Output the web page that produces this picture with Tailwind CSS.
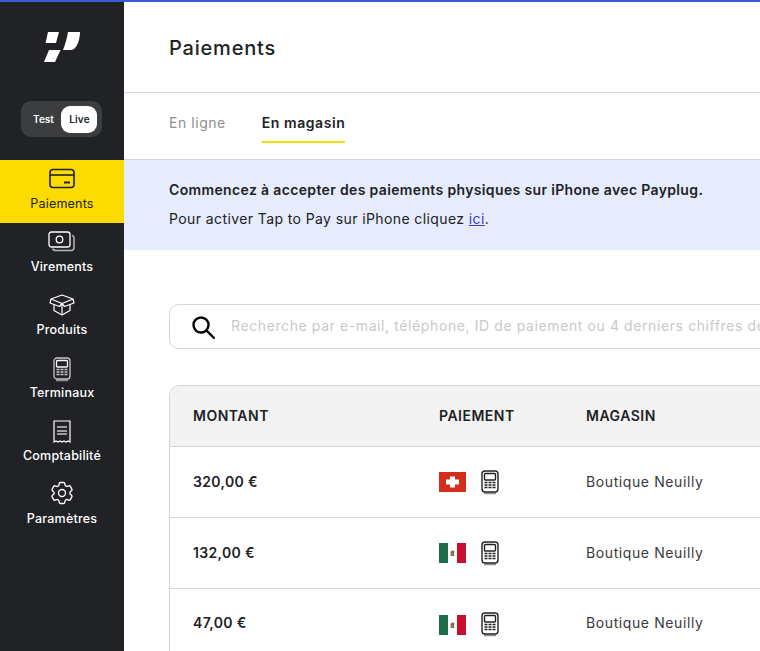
<!DOCTYPE html>
<html lang="fr">
<head>
  <meta charset="UTF-8" />
  <title>Paiements</title>
  <script src="https://cdn.jsdelivr.net/npm/@tailwindcss/browser@4"></script>
</head>
<body class="h-[651px] w-[760px] overflow-hidden bg-white font-['Inter','Liberation_Sans',sans-serif] text-[#202225]">
  <div class="h-[2px] bg-[#3a5bd9]"></div>
  <div class="flex h-[649px]">
    <!-- sidebar -->
    <aside class="w-[124px] shrink-0 bg-[#202225] flex flex-col items-center">
      <svg class="mt-[30px] w-[36px] h-[32px] self-start ml-[44px]" viewBox="0 0 36 32" fill="#fff">
        <path d="M4 0H15L12 11H1.5Z"/>
        <path d="M24 0H36C36 6 34 13 31 16C30 17.2 28.5 18 26.5 18H16.5L11 30H0L5 18H19C21 13 23 6 24 0Z"/>
      </svg>
      <div class="mt-[37px] self-start ml-[21px] w-[81px] h-[36px] rounded-[10px] bg-[#3c3d3f] flex items-center pl-[5px] pr-[4px]">
        <span class="w-[35px] text-center text-[10px] font-semibold text-white">Test</span>
        <span class="w-[36px] h-[27px] rounded-[9px] bg-white flex items-center justify-center text-[10px] font-semibold text-[#202225] tracking-[0.2px] pl-[1px]">Live</span>
      </div>
      <nav class="mt-[23px] w-full flex flex-col tracking-[0.2px]">
        <a class="h-[63px] bg-[#fbdb00] flex flex-col items-center pt-[8px] text-[#202225]">
          <svg class="w-[26px] h-[22px]" viewBox="0 0 26 22" fill="none" stroke="currentColor" stroke-width="1.6">
            <rect x="1" y="1.5" width="24" height="18" rx="3"/>
            <path d="M1 7H25"/>
            <path d="M15 14.5H21" stroke-width="2"/>
          </svg>
          <span class="mt-[5px] text-[12.5px] leading-[18px] font-normal">Paiements</span>
        </a>
        <a class="h-[63px] flex flex-col items-center pt-[8px] text-white">
          <svg class="w-[28px] h-[22px]" viewBox="0 0 28 22" fill="none" stroke="currentColor" stroke-width="1.3">
            <rect x="1" y="1" width="21" height="15" rx="2.5"/>
            <circle cx="11.5" cy="8.5" r="3.3"/>
            <path d="M24 4.5C25.5 4.8 26 5.5 26 7V16.5C26 18.5 25 19.5 23 19.5H8C6 19.5 5 19 4.7 17.5" stroke="#b5b6b8" stroke-width="1.5"/>
          </svg>
          <span class="mt-[5px] text-[12.5px] leading-[18px] font-medium">Virements</span>
        </a>
        <a class="h-[63px] flex flex-col items-center pt-[8px] text-white">
          <svg class="w-[26px] h-[22px]" viewBox="0 0 26 22" fill="none" stroke="currentColor" stroke-width="1.2" stroke-linejoin="round">
            <path d="M13 1L24 5L13 9.5L2 5Z"/>
            <path d="M2 5L1 9L5 10.5V16.5L13 21L21 16.5V10.5L25 9L24 5"/>
            <path d="M13 9.5V21"/>
            <path d="M5 10.5L10.5 12.5L13 9.5L15.5 12.5L21 10.5"/>
          </svg>
          <span class="mt-[5px] text-[12.5px] leading-[18px] font-medium">Produits</span>
        </a>
        <a class="h-[63px] flex flex-col items-center pt-[8px] text-white">
          <svg class="w-[18px] h-[25px]" viewBox="0 0 18 25" fill="none" stroke="currentColor" stroke-width="1.3">
            <rect x="1" y="1" width="16" height="21" rx="3" stroke="#c8c8c8"/>
            <rect x="3.5" y="3.5" width="11" height="6.5" rx="1"/>
            <path d="M3.5 12.5H6.5M7.5 12.5H10.5M11.5 12.5H14.5M3.5 15H6.5M7.5 15H10.5M11.5 15H14.5M3.5 17.5H6.5M7.5 17.5H10.5M11.5 17.5H14.5" stroke-width="1.6" stroke="#c8c8c8"/>
            <path d="M3.5 23.5H14.5" stroke-dasharray="1 1" stroke-width="1.5"/>
          </svg>
          <span class="mt-[2px] text-[12.5px] leading-[18px] font-medium">Terminaux</span>
        </a>
        <a class="h-[63px] flex flex-col items-center pt-[8px] text-white">
          <svg class="w-[18px] h-[23px]" viewBox="0 0 18 23" fill="none" stroke="currentColor" stroke-width="1.2">
            <path d="M1 22V1H17V22L15 21L13 22L11 21L9 22L7 21L5 22L3 21Z"/>
            <path d="M4 7H14M4 11H14M4 14H14" stroke="#c8c8c8" stroke-width="1.4"/>
          </svg>
          <span class="mt-[4px] text-[12.5px] leading-[18px] font-medium">Comptabilité</span>
        </a>
        <a class="h-[63px] flex flex-col items-center pt-[4px] text-white">
          <svg class="w-[28px] h-[28px]" viewBox="0 0 24 24" fill="none" stroke="currentColor" stroke-width="1.15" stroke-linejoin="round">
            <path d="M9.594 3.94c.09-.542.56-.94 1.11-.94h2.593c.55 0 1.02.398 1.11.94l.213 1.281c.063.374.313.686.645.87.074.04.147.083.22.127.325.196.72.257 1.075.124l1.217-.456a1.125 1.125 0 0 1 1.37.49l1.296 2.247a1.125 1.125 0 0 1-.26 1.431l-1.003.827c-.293.241-.438.613-.43.992a7.723 7.723 0 0 1 0 .255c-.008.378.137.75.43.991l1.004.827c.424.35.534.955.26 1.43l-1.298 2.247a1.125 1.125 0 0 1-1.369.491l-1.217-.456c-.355-.133-.75-.072-1.076.124a6.47 6.47 0 0 1-.22.128c-.331.183-.581.495-.644.869l-.213 1.281c-.09.543-.56.94-1.11.94h-2.594c-.55 0-1.019-.398-1.11-.94l-.213-1.281c-.062-.374-.312-.686-.644-.87a6.52 6.52 0 0 1-.22-.127c-.325-.196-.72-.257-1.076-.124l-1.217.456a1.125 1.125 0 0 1-1.369-.49l-1.297-2.247a1.125 1.125 0 0 1 .26-1.431l1.004-.827c.292-.24.437-.613.43-.991a6.932 6.932 0 0 1 0-.255c.007-.38-.138-.751-.43-.992l-1.004-.827a1.125 1.125 0 0 1-.26-1.43l1.297-2.247a1.125 1.125 0 0 1 1.37-.491l1.216.456c.356.133.751.072 1.076-.124.072-.044.146-.086.22-.128.332-.183.582-.495.644-.869l.214-1.28Z"/>
            <circle cx="12" cy="12" r="3"/>
          </svg>
          <span class="mt-[3px] text-[12.5px] leading-[18px] font-medium">Paramètres</span>
        </a>
      </nav>
    </aside>

    <main class="flex-1 min-w-0 overflow-hidden">
      <header class="h-[91px] border-b border-[#d5d5d5] pl-[45px] flex items-center">
        <h1 class="text-[20px] font-medium tracking-[0.8px] pt-[2px]">Paiements</h1>
      </header>
      <div class="h-[67px] border-b border-[#d5d5d5] pl-[45px] flex gap-[36px] text-[14px] tracking-[0.55px]">
        <a class="pt-[19px] text-[#8f8f8f]">En ligne</a>
        <a class="pt-[19px] h-[50px] border-b-2 border-[#fbdb00] font-semibold">En magasin</a>
      </div>
      <div class="h-[90px] bg-[#e6ecfb] pl-[45px] pt-[20px] text-[14px]">
        <p class="font-semibold leading-[20px] tracking-[0.35px]">Commencez à accepter des paiements physiques sur iPhone avec Payplug.</p>
        <p class="mt-[9px] leading-[20px] tracking-[0.4px]">Pour activer Tap to Pay sur iPhone cliquez <a class="text-[#3a3fc4] underline">ici</a>.</p>
      </div>

      <div class="pl-[45px] w-[1000px]">
        <div class="mt-[54px] h-[45px] border border-[#d5d5d5] rounded-[10px] flex items-center pl-[21px] overflow-hidden">
          <svg class="w-[24px] h-[24px] shrink-0" viewBox="0 0 24 24" fill="none" stroke="#000" stroke-width="2.4">
            <circle cx="10" cy="10" r="7.5"/>
            <path d="M15.5 15.5L23 23" stroke-linecap="round"/>
          </svg>
          <span class="ml-[16px] pb-[2px] text-[14px] tracking-[0.6px] text-[#c9c9c9] whitespace-nowrap">Recherche par e-mail, téléphone, ID de paiement ou 4 derniers chiffres de la carte</span>
        </div>

        <div class="mt-[36px] border border-[#d5d5d5] rounded-t-[10px] overflow-hidden">
          <div class="h-[61px] bg-[#f3f3f3] border-b border-[#d5d5d5] flex items-center text-[14px] font-semibold tracking-[0.5px]">
            <div class="w-[269px] pl-[23px] pb-[2px]">MONTANT</div>
            <div class="w-[147px] pb-[2px]">PAIEMENT</div>
            <div class="pb-[2px]">MAGASIN</div>
          </div>
          <div class="h-[71px] border-b border-[#d5d5d5] flex items-center text-[14px]">
            <div class="w-[269px] pl-[23px] pb-[2px] font-semibold tracking-[0.35px]">320,00 €</div>
            <div class="w-[147px] flex items-center gap-[15px]">
              <svg class="w-[27px] h-[20px]" viewBox="0 0 27 20"><rect width="27" height="20" fill="#d32d1b"/><path d="M11 4.5H16V7.5H20V12.5H16V15.5H11V12.5H7V7.5H11Z" fill="#fff"/></svg>
              <svg class="w-[18px] h-[25px]" viewBox="0 0 18 25" fill="none" stroke="#202225" stroke-width="1.4">
                <rect x="1" y="1" width="16" height="21" rx="3"/>
                <rect x="3.5" y="3.5" width="11" height="6.5" rx="1"/>
                <path d="M3.5 12.5H6.5M7.5 12.5H10.5M11.5 12.5H14.5M3.5 15H6.5M7.5 15H10.5M11.5 15H14.5M3.5 17.5H6.5M7.5 17.5H10.5M11.5 17.5H14.5" stroke-width="1.6"/>
                <path d="M3.5 23.5H14.5" stroke-dasharray="1 1" stroke-width="1.5"/>
              </svg>
            </div>
            <div class="pb-[2px] tracking-[0.6px] text-[#3a3a3a]">Boutique Neuilly</div>
          </div>
          <div class="h-[71px] border-b border-[#d5d5d5] flex items-center text-[14px]">
            <div class="w-[269px] pl-[23px] pb-[2px] font-semibold tracking-[0.35px]">132,00 €</div>
            <div class="w-[147px] flex items-center gap-[15px]">
              <svg class="w-[27px] h-[20px]" viewBox="0 0 27 20"><rect width="9" height="20" fill="#1f6b4a"/><rect x="9" width="9" height="20" fill="#fff"/><rect x="18" width="9" height="20" fill="#c8102e"/><path d="M11.5 9C12.5 7 14.5 7 15.5 8.5L15 11.5C14 13 12.5 12.5 11.5 11Z" fill="#8a6d3b"/><path d="M11.5 12.5H15.5" stroke="#4d8a5f" stroke-width="1"/></svg>
              <svg class="w-[18px] h-[25px]" viewBox="0 0 18 25" fill="none" stroke="#202225" stroke-width="1.4">
                <rect x="1" y="1" width="16" height="21" rx="3"/>
                <rect x="3.5" y="3.5" width="11" height="6.5" rx="1"/>
                <path d="M3.5 12.5H6.5M7.5 12.5H10.5M11.5 12.5H14.5M3.5 15H6.5M7.5 15H10.5M11.5 15H14.5M3.5 17.5H6.5M7.5 17.5H10.5M11.5 17.5H14.5" stroke-width="1.6"/>
                <path d="M3.5 23.5H14.5" stroke-dasharray="1 1" stroke-width="1.5"/>
              </svg>
            </div>
            <div class="pb-[2px] tracking-[0.6px] text-[#3a3a3a]">Boutique Neuilly</div>
          </div>
          <div class="h-[71px] flex items-center text-[14px]">
            <div class="w-[269px] pl-[23px] pb-[4px] font-semibold tracking-[0.35px]">47,00 €</div>
            <div class="w-[147px] flex items-center gap-[15px]">
              <svg class="w-[27px] h-[20px]" viewBox="0 0 27 20"><rect width="9" height="20" fill="#1f6b4a"/><rect x="9" width="9" height="20" fill="#fff"/><rect x="18" width="9" height="20" fill="#c8102e"/><path d="M11.5 9C12.5 7 14.5 7 15.5 8.5L15 11.5C14 13 12.5 12.5 11.5 11Z" fill="#8a6d3b"/><path d="M11.5 12.5H15.5" stroke="#4d8a5f" stroke-width="1"/></svg>
              <svg class="w-[18px] h-[25px]" viewBox="0 0 18 25" fill="none" stroke="#202225" stroke-width="1.4">
                <rect x="1" y="1" width="16" height="21" rx="3"/>
                <rect x="3.5" y="3.5" width="11" height="6.5" rx="1"/>
                <path d="M3.5 12.5H6.5M7.5 12.5H10.5M11.5 12.5H14.5M3.5 15H6.5M7.5 15H10.5M11.5 15H14.5M3.5 17.5H6.5M7.5 17.5H10.5M11.5 17.5H14.5" stroke-width="1.6"/>
                <path d="M3.5 23.5H14.5" stroke-dasharray="1 1" stroke-width="1.5"/>
              </svg>
            </div>
            <div class="pb-[4px] tracking-[0.6px] text-[#3a3a3a]">Boutique Neuilly</div>
          </div>
        </div>
      </div>
    </main>
  </div>
</body>
</html>
